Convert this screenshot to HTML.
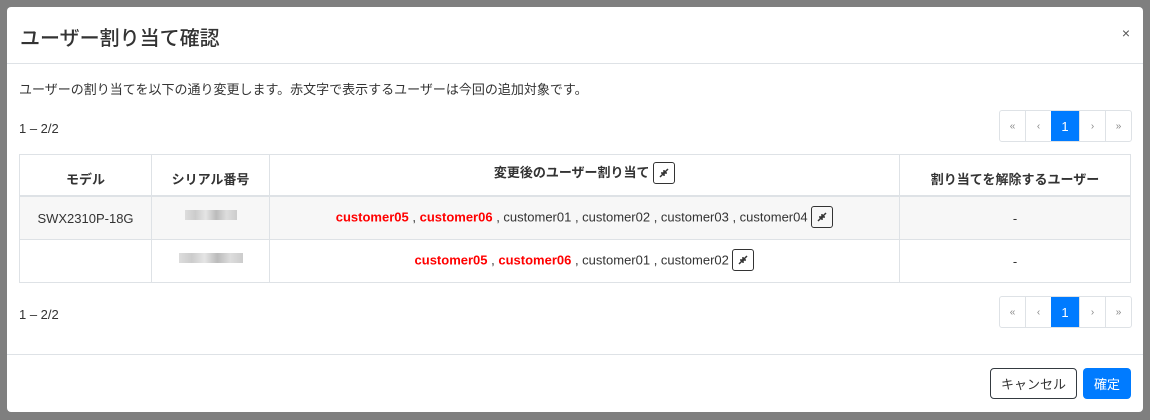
<!DOCTYPE html><html><head><style>
body{margin:0;width:1150px;height:420px;background:#7f7f7f;font-family:"Liberation Sans","Noto Sans CJK JP",sans-serif;color:#212529;position:relative;overflow:hidden}
.m{position:absolute;left:7px;top:7px;width:1136px;height:405px;background:#fff;border-radius:4px}
.hd{position:absolute;left:0;top:0;right:0;height:56px;border-bottom:1px solid #dee2e6}
.ttl{position:absolute;left:13px;top:15px;font-size:20px;font-weight:500;color:#333}
.x{position:absolute;right:13px;top:18px;font-size:14px;color:#555}
.t{position:absolute;font-size:13px;color:#333}
.pg{position:absolute;left:992px;display:flex;border:1px solid #dee2e6;border-radius:3px;height:30px;font-size:10px;color:#888}
.pg div{width:25px;display:flex;align-items:center;justify-content:center;border-left:1px solid #dee2e6}
.pg div:first-child{border-left:none}
.pg .a{background:#007bff;color:#fff;font-size:13px;width:28px;border:none}
table{position:absolute;left:12px;top:147px;width:1112px;border-collapse:collapse;font-size:13px;color:#333}
td,th{border:1px solid #dee2e6;text-align:center;padding:0}
th{height:33px;border-bottom:2px solid #dee2e6;font-weight:bold;vertical-align:bottom;padding-bottom:7px}
td{height:42px}
.r{color:#f00;font-weight:bold}
.ic{display:inline-block;width:22px;height:22px;border:1px solid #333;border-radius:3px;vertical-align:middle;box-sizing:border-box;position:relative;top:-1px}
.blur{display:inline-block;height:10px;background:linear-gradient(90deg,#ddd,#ccc,#e5e5e5,#bbb,#ddd,#ccc);position:relative;top:-3px}
.ft{position:absolute;left:0;right:0;top:347px;border-top:1px solid #dee2e6}
.b{position:absolute;top:361px;height:31px;border-radius:4px;font-size:13px;display:flex;align-items:center;justify-content:center;box-sizing:border-box}
</style></head><body>
<div class="m">
<div class="hd"><div class="ttl">ユーザー割り当て確認</div><div class="x">×</div></div>
<div class="t" style="left:12px;top:72px">ユーザーの割り当てを以下の通り変更します。赤文字で表示するユーザーは今回の追加対象です。</div>
<div class="t" style="left:12px;top:114px">1 – 2/2</div>
<div class="pg" style="top:103px"><div>«</div><div>‹</div><div class="a">1</div><div>›</div><div>»</div></div>
<table>
<tr><th style="width:131px">モデル</th><th style="width:117px">シリアル番号</th><th style="vertical-align:middle;padding:0 0 3px">変更後のユーザー割り当て <span class="ic"><svg width="20" height="20" viewBox="0 0 20 20"><path d="M14 6l-4 4M6 14l4-4M10 7v3h3M10 13v-3H7" stroke="#333" stroke-width="1.5" fill="none"/></svg></span></th><th style="width:230px">割り当てを解除するユーザー</th></tr>
<tr style="background:#f7f7f7"><td>SWX2310P-18G</td><td><span class="blur" style="width:52px"></span></td><td><span class="r">customer05</span> , <span class="r">customer06</span> , customer01 , customer02 , customer03 , customer04 <span class="ic"><svg width="20" height="20" viewBox="0 0 20 20"><path d="M14 6l-4 4M6 14l4-4M10 7v3h3M10 13v-3H7" stroke="#333" stroke-width="1.5" fill="none"/></svg></span></td><td>-</td></tr>
<tr><td></td><td><span class="blur" style="width:64px"></span></td><td><span class="r">customer05</span> , <span class="r">customer06</span> , customer01 , customer02 <span class="ic"><svg width="20" height="20" viewBox="0 0 20 20"><path d="M14 6l-4 4M6 14l4-4M10 7v3h3M10 13v-3H7" stroke="#333" stroke-width="1.5" fill="none"/></svg></span></td><td>-</td></tr>
</table>
<div class="t" style="left:12px;top:300px">1 – 2/2</div>
<div class="pg" style="top:289px"><div>«</div><div>‹</div><div class="a">1</div><div>›</div><div>»</div></div>
<div class="ft"></div>
<div class="b" style="left:983px;width:87px;border:1px solid #343a40;color:#333">キャンセル</div>
<div class="b" style="left:1076px;width:48px;background:#007bff;color:#fff">確定</div>
</div>
</body></html>
